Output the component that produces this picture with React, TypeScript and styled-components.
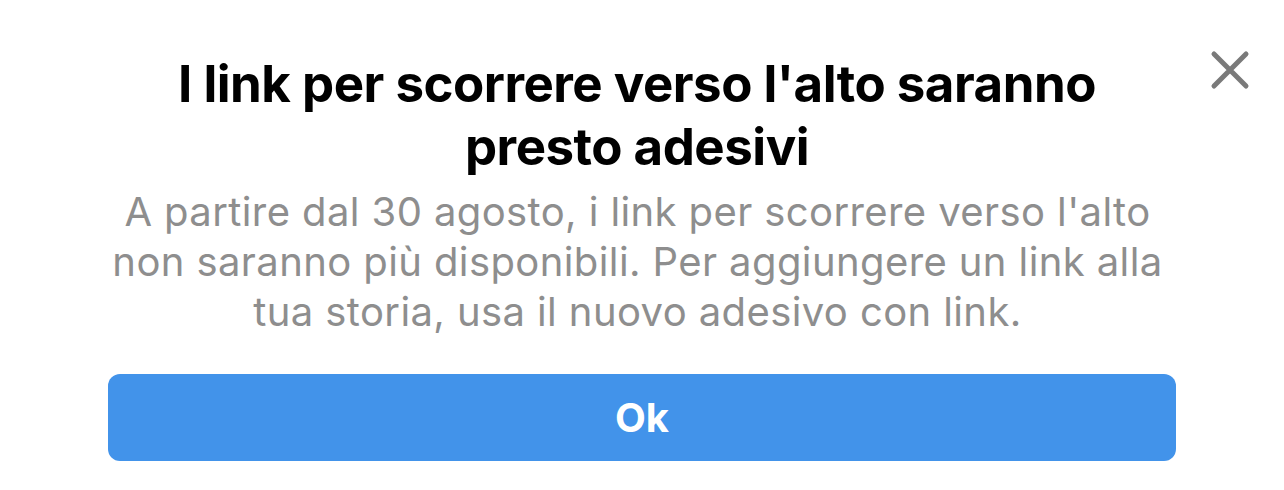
import React from "react";
import styled, { createGlobalStyle } from "styled-components";

const Global = createGlobalStyle`
  html, body { margin: 0; padding: 0; background: #ffffff; }
  body { font-family: Inter, "Liberation Sans", Arial, sans-serif; -webkit-font-smoothing: antialiased; }
`;

const Sheet = styled.div`
  position: relative;
  width: 1284px;
  height: 490px;
  box-sizing: border-box;
  padding: 52px 108px 0 108px;
  display: flex;
  flex-direction: column;
  align-items: center;
  background: #fff;
`;

const Title = styled.h1`
  margin: 0;
  padding-right: 10px;
  font-size: 51px;
  line-height: 63px;
  font-weight: 700;
  color: #000;
  text-align: center;
  letter-spacing: -0.5px;
  white-space: nowrap;
`;

const Body = styled.p`
  margin: 9px 0 0 0;
  padding-right: 9px;
  font-size: 40px;
  line-height: 50px;
  font-weight: 400;
  color: #8e8e8e;
  text-align: center;
  letter-spacing: 0.4px;
  white-space: nowrap;
`;

const Button = styled.button`
  margin-top: 37px;
  width: 1068px;
  height: 87px;
  border: none;
  border-radius: 12px;
  background: #4293ea;
  color: #fff;
  font-family: inherit;
  font-size: 40px;
  font-weight: 700;
  cursor: pointer;
`;

const Close = styled.button`
  position: absolute;
  top: 50px;
  right: 34px;
  width: 40px;
  height: 40px;
  padding: 0;
  border: none;
  background: transparent;
  display: flex;
  align-items: center;
  justify-content: center;
`;

export default function App() {
  return (
    <>
      <Global />
      <Sheet>
        <Close aria-label="Chiudi">
          <svg width="40" height="40" viewBox="0 0 40 40">
            <path d="M4 4 L36 36 M36 4 L4 36" stroke="#7a7a7a" strokeWidth="5" strokeLinecap="round" />
          </svg>
        </Close>
        <Title>
          I link per scorrere verso l'alto saranno
          <br />
          presto adesivi
        </Title>
        <Body>
          A partire dal 30 agosto, i link per scorrere verso l'alto
          <br />
          non saranno più disponibili. Per aggiungere un link alla
          <br />
          tua storia, usa il nuovo adesivo con link.
        </Body>
        <Button>Ok</Button>
      </Sheet>
    </>
  );
}
